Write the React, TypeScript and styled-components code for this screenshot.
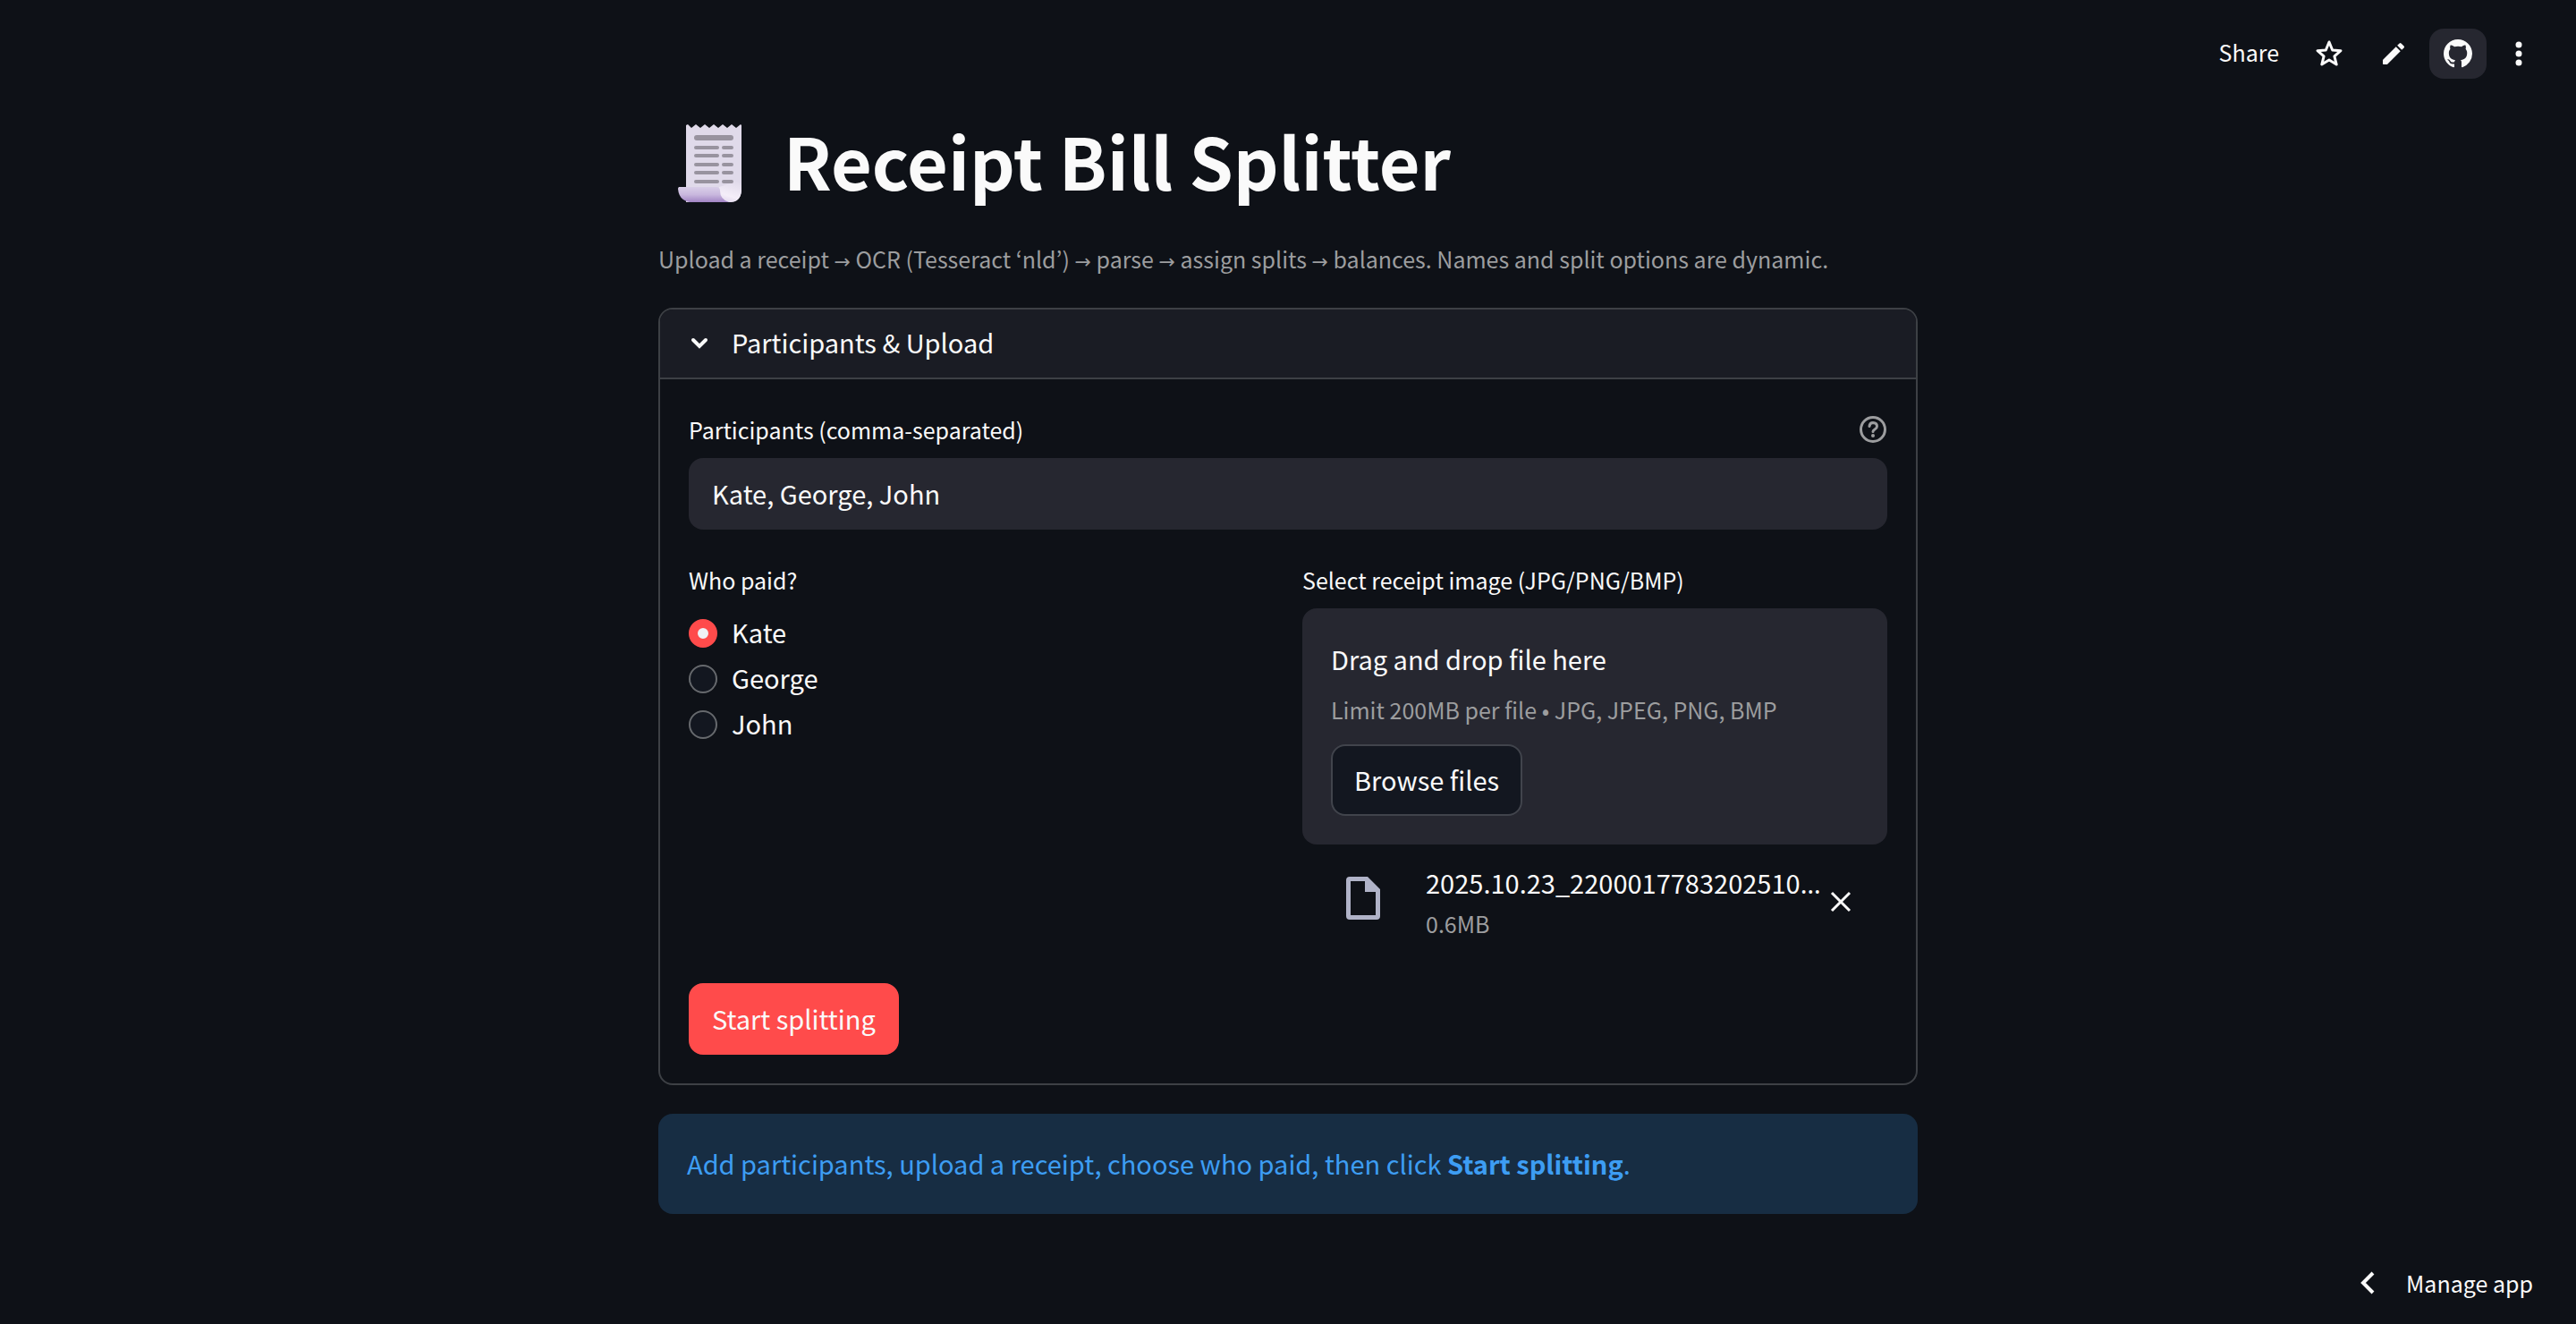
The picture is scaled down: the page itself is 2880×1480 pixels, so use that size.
import React, { useRef, useState } from 'react';
import styled, { createGlobalStyle, css } from 'styled-components';

const color = {
  bg: '#0e1117',
  raised: '#1a1c24',
  field: '#262730',
  button: '#131720',
  text: '#fafafa',
  muted: '#9c9d9f',
  line: '#3d4045',
  primary: '#ff4b4b',
  infoBg: '#172d43',
  info: '#3d9df3',
};

const GlobalStyle = createGlobalStyle`
  *, *::before, *::after { box-sizing: border-box; }
  body {
    margin: 0;
    background: ${color.bg};
    color: ${color.text};
    font: 400 29px/44px "Noto Sans CJK KR", "Noto Sans", sans-serif;
  }
  button, input { font: inherit; color: inherit; }
  button { cursor: pointer; }
`;

const Page = styled.div`
  display: flex;
  flex-direction: column;
  min-height: 100vh;
`;

const Toolbar = styled.header`
  display: flex;
  justify-content: flex-end;
  align-items: center;
  gap: 8px;
  height: 120px;
  padding: 0 36px;
`;

const ToolButton = styled.button<{ $active?: boolean; $width?: number }>`
  display: flex;
  align-items: center;
  justify-content: center;
  width: ${(p) => (p.$width ? `${p.$width}px` : 'auto')};
  height: 56px;
  padding: ${(p) => (p.$width ? '0' : '0 16px 4px')};
  border: 0;
  border-radius: 16px;
  background: ${(p) => (p.$active ? color.field : 'transparent')};
  font-size: 25px;
`;

const Icon = styled.svg<{ $size?: number }>`
  flex: none;
  width: ${(p) => p.$size ?? 32}px;
  height: ${(p) => p.$size ?? 32}px;
  fill: currentColor;
`;

const Main = styled.main`
  width: 100%;
  max-width: 1408px;
  margin: 0 auto;
`;

const Title = styled.h1`
  display: flex;
  align-items: center;
  gap: 28px;
  margin: 0;
  font-size: 79px;
  font-weight: 700;
  line-height: 118px;
`;

const ReceiptArt = styled.svg`
  flex: none;
  width: 112px;
  height: 112px;
`;

const Caption = styled.p`
  margin: 31px 0 35px;
  color: ${color.muted};
  font-size: 25px;
  line-height: 40px;
`;

const Arrow = styled.span`
  font-family: "DejaVu Sans", sans-serif;
  font-size: 22px;
  line-height: 1;
`;

const Ellipsis = styled.span`
  font-family: "Noto Sans", sans-serif;
  line-height: 1;
`;

const Panel = styled.details`
  border: 2px solid ${color.line};
  border-radius: 16px;
  overflow: hidden;
`;

const PanelHeader = styled.summary`
  display: flex;
  align-items: center;
  gap: 20px;
  padding: 14px 28px 18px;
  background: ${color.raised};
  cursor: pointer;
  list-style: none;
`;

const PanelBody = styled.form`
  display: flex;
  flex-direction: column;
  gap: 32px;
  padding: 32px;
  border-top: 2px solid ${color.line};
`;

const labelText = css`
  font-size: 25px;
  line-height: 48px;
`;

const LabelRow = styled.div`
  display: flex;
  align-items: center;
  justify-content: space-between;
  margin-bottom: 8px;
`;

const FieldLabel = styled.label`
  ${labelText}
`;

const HelpButton = styled.button`
  display: flex;
  padding: 0;
  border: 0;
  background: none;
  color: ${color.muted};
`;

const TextInput = styled.input`
  display: block;
  width: 100%;
  height: 80px;
  padding: 0 26px 2px;
  border: 0;
  border-radius: 16px;
  background: ${color.field};
`;

const Columns = styled.div`
  display: grid;
  grid-template-columns: 1fr 1fr;
  gap: 32px;
`;

const Column = styled.div`
  min-width: 0;
`;

const RadioGroup = styled.fieldset`
  min-width: 0;
  margin: 0;
  padding: 0;
  border: 0;
`;

const Legend = styled.legend`
  ${labelText}
  margin-bottom: 8px;
  padding: 0;
`;

const RadioList = styled.div`
  display: grid;
  justify-items: start;
  gap: 3px;
  padding-top: 4px;
`;

const RadioOption = styled.label`
  display: flex;
  align-items: center;
  gap: 16px;
  height: 48px;
  cursor: pointer;
`;

const RadioInput = styled.input`
  appearance: none;
  flex: none;
  width: 32px;
  height: 32px;
  margin: 0;
  border: 2px solid #66696d;
  border-radius: 50%;
  background: ${color.button};

  &:checked {
    border: 10px solid ${color.primary};
    background: #f0f2f6;
  }
`;

const RadioText = styled.span`
  padding-bottom: 4px;
`;

const Dropzone = styled.section`
  display: flex;
  flex-direction: column;
  align-items: flex-start;
  padding: 32px;
  border-radius: 16px;
  background: ${color.field};
`;

const DropHint = styled.span`
  line-height: 48px;
`;

const DropLimit = styled.span`
  margin: 9px 0 15px;
  color: ${color.muted};
  font-size: 25px;
  line-height: 48px;
`;

const HiddenFile = styled.input`
  display: none;
`;

const Button = styled.button<{ $primary?: boolean }>`
  align-self: flex-start;
  height: 80px;
  padding: 0 24px 3px;
  border: 2px solid ${(p) => (p.$primary ? color.primary : '#41444c')};
  border-radius: 16px;
  background: ${(p) => (p.$primary ? color.primary : color.button)};
`;

const FileRow = styled.div`
  display: flex;
  align-items: flex-start;
  padding: 20px 40px 13px 48px;
`;

const FileIcon = styled.svg`
  flex: none;
  width: 40px;
  height: 48px;
  margin: 16px 50px 0 0;
  fill: #b0b3c8;
`;

const FileInfo = styled.div`
  display: flex;
  flex: 1;
  flex-direction: column;
  gap: 2px;
  min-width: 0;
`;

const FileName = styled.span`
  white-space: nowrap;
`;

const FileSize = styled.span`
  color: ${color.muted};
  font-size: 25px;
`;

const RemoveButton = styled.button`
  display: flex;
  align-items: center;
  height: 88px;
  margin-left: 8px;
  padding: 0;
  border: 0;
  background: none;
`;

const Info = styled.div`
  margin-top: 32px;
  padding: 31px 32px 33px;
  border-radius: 16px;
  background: ${color.infoBg};
  color: ${color.info};
  line-height: 48px;
`;

const Footer = styled.footer`
  display: flex;
  justify-content: flex-end;
  margin-top: auto;
  padding: 0 48px 24px;
`;

const ManageButton = styled.button`
  display: flex;
  align-items: center;
  gap: 24px;
  padding: 0;
  border: 0;
  background: none;
  font-size: 25px;
`;

const Receipt = () => (
  <ReceiptArt viewBox="0 0 112 112" aria-hidden="true">
    <defs>
      <linearGradient id="roll" x1="0" y1="0" x2="0" y2="1">
        <stop offset="0" stopColor="#d9cfe8" />
        <stop offset="0.5" stopColor="#c9b8de" />
        <stop offset="1" stopColor="#a184c4" />
      </linearGradient>
      <linearGradient id="curl" x1="0.6" y1="0" x2="0.3" y2="1">
        <stop offset="0" stopColor="#e0daea" />
        <stop offset="0.7" stopColor="#f4eef9" />
        <stop offset="1" stopColor="#e3d9ee" />
      </linearGradient>
    </defs>
    <path
      d="M31 17l2-1 4 4 5-4 5 4 5-4 5 4 5-4 5 4 5-4 5 4 5-4 5 4 5-4 1 1v73q-1 13-14 13H31z"
      fill="#e0daea"
    />
    <path d="M68 86l25-8v12q-1 13-13 13-12-1-12-13z" fill="url(#curl)" />
    <path d="M23 86h43q3 1 3 4 0 10 10 13H35q-12-2-13-15 0-1 1-2z" fill="url(#roll)" />
    <rect x="40" y="28" width="44" height="6" rx="3" fill="#98939f" />
    {[40, 49, 59, 68, 78].map((y) => (
      <g key={y} fill="#98939f">
        <rect x="40" y={y} width="28" height="4" rx="2" />
        <rect x="71" y={y} width="13" height="4" rx="2" />
      </g>
    ))}
  </ReceiptArt>
);

const people = ['Kate', 'George', 'John'];

export default function App() {
  const [names, setNames] = useState(people.join(', '));
  const [payer, setPayer] = useState('Kate');
  const [hasFile, setHasFile] = useState(true);
  const fileRef = useRef<HTMLInputElement>(null);

  return (
    <>
      <GlobalStyle />
      <Page>
        <Toolbar>
          <ToolButton type="button">Share</ToolButton>
          <ToolButton type="button" $width={64} aria-label="Favorite">
            <Icon viewBox="0 0 32 32">
              <path
                d="M16 3l3.700 9 9.300.700-7.100 6.100 2.300 9.200-8.200-5-8.200 5 2.300-9.200L3 12.700l9.300-.700z"
                fill="none"
                stroke="currentColor"
                strokeWidth="3"
                strokeLinejoin="round"
              />
            </Icon>
          </ToolButton>
          <ToolButton type="button" $width={64} aria-label="Edit source">
            <Icon viewBox="0 0 24 24">
              <path d="M3 17.460v3.040c0 .280.220.500.500.500h3.040c.130 0 .260-.050.350-.150L17.810 9.940l-3.750-3.750L3.150 17.100c-.100.100-.150.220-.150.360zM20.710 7.040a.996.996 0 0 0 0-1.410l-2.340-2.340a.996.996 0 0 0-1.410 0l-1.830 1.830 3.750 3.750 1.830-1.830z" />
            </Icon>
          </ToolButton>
          <ToolButton type="button" $width={64} $active aria-label="View on GitHub">
            <Icon viewBox="0 0 16 16">
              <path d="M8 0C3.580 0 0 3.580 0 8c0 3.540 2.290 6.530 5.470 7.590.400.070.550-.170.550-.380 0-.190-.010-.820-.010-1.490-2.010.370-2.530-.490-2.690-.940-.090-.230-.480-.940-.820-1.130-.280-.150-.680-.520-.010-.530.630-.010 1.080.580 1.230.820.720 1.210 1.870.870 2.330.660.070-.520.280-.870.510-1.070-1.780-.200-3.640-.890-3.640-3.950 0-.870.310-1.590.820-2.150-.080-.200-.360-1.020.080-2.120 0 0 .670-.210 2.200.820.640-.180 1.320-.270 2-.270s1.360.090 2 .270c1.530-1.040 2.200-.820 2.200-.820.440 1.100.160 1.920.080 2.120.510.560.820 1.270.820 2.150 0 3.070-1.870 3.750-3.650 3.950.290.250.540.730.540 1.480 0 1.070-.010 1.930-.010 2.200 0 .210.150.460.550.380A8.013 8.013 0 0 0 16 8c0-4.420-3.580-8-8-8z" />
            </Icon>
          </ToolButton>
          <ToolButton type="button" $width={56} aria-label="Main menu">
            <Icon viewBox="0 0 32 32">
              <circle cx="16" cy="6" r="3.500" />
              <circle cx="16" cy="16" r="3.500" />
              <circle cx="16" cy="26" r="3.500" />
            </Icon>
          </ToolButton>
        </Toolbar>

        <Main>
          <Title>
            <Receipt />
            Receipt Bill Splitter
          </Title>
          <Caption>
            Upload a receipt <Arrow>→</Arrow> OCR (Tesseract ‘nld’) <Arrow>→</Arrow> parse <Arrow>→</Arrow> assign
            splits <Arrow>→</Arrow> balances. Names and split options are dynamic.
          </Caption>

          <Panel open>
            <PanelHeader>
              <Icon viewBox="0 0 32 32">
                <path d="M9 14l7 7 7-7" fill="none" stroke="currentColor" strokeWidth="4" strokeLinecap="round" />
              </Icon>
              Participants &amp; Upload
            </PanelHeader>
            <PanelBody onSubmit={(e) => e.preventDefault()}>
              <div>
                <LabelRow>
                  <FieldLabel htmlFor="participants">Participants (comma-separated)</FieldLabel>
                  <HelpButton type="button" aria-label="Help">
                    <Icon viewBox="0 0 32 32">
                      <g fill="none" stroke="currentColor" strokeWidth="3" strokeLinecap="round">
                        <circle cx="16" cy="16" r="13.500" />
                        <path d="M12 12.500q.500-4 4-4 4.500.300 4.500 4 0 2-2.500 3.500-2 1.200-2 2.500" />
                      </g>
                      <circle cx="16" cy="23" r="2" />
                    </Icon>
                  </HelpButton>
                </LabelRow>
                <TextInput id="participants" type="text" value={names} onChange={(e) => setNames(e.target.value)} />
              </div>

              <Columns>
                <Column>
                  <RadioGroup>
                    <Legend>Who paid?</Legend>
                    <RadioList>
                      {people.map((person) => (
                        <RadioOption key={person}>
                          <RadioInput
                            type="radio"
                            name="payer"
                            checked={payer === person}
                            onChange={() => setPayer(person)}
                          />
                          <RadioText>{person}</RadioText>
                        </RadioOption>
                      ))}
                    </RadioList>
                  </RadioGroup>
                </Column>
                <Column>
                  <LabelRow>
                    <FieldLabel htmlFor="receipt">Select receipt image (JPG/PNG/BMP)</FieldLabel>
                  </LabelRow>
                  <Dropzone>
                    <DropHint>Drag and drop file here</DropHint>
                    <DropLimit>Limit 200MB per file • JPG, JPEG, PNG, BMP</DropLimit>
                    <HiddenFile ref={fileRef} id="receipt" type="file" accept=".jpg,.jpeg,.png,.bmp" />
                    <Button type="button" onClick={() => fileRef.current?.click()}>
                      Browse files
                    </Button>
                  </Dropzone>
                  {hasFile && (
                    <FileRow>
                      <FileIcon viewBox="0 0 40 48" aria-hidden="true">
                        <path
                          fillRule="evenodd"
                          d="M5 0h20l14 14v30a4 4 0 0 1-4 4H5a4 4 0 0 1-4-4V4a4 4 0 0 1 4-4zm1 5v38h28V17H22V5z"
                        />
                      </FileIcon>
                      <FileInfo>
                        <FileName>
                          2025.10.23_2200017783202510<Ellipsis>…</Ellipsis>
                        </FileName>
                        <FileSize>0.6MB</FileSize>
                      </FileInfo>
                      <RemoveButton type="button" aria-label="Remove file" onClick={() => setHasFile(false)}>
                        <Icon viewBox="0 0 24 24" $size={24}>
                          <path d="M2 2l20 20M22 2L2 22" stroke="currentColor" strokeWidth="3" />
                        </Icon>
                      </RemoveButton>
                    </FileRow>
                  )}
                </Column>
              </Columns>

              <Button type="submit" $primary>
                Start splitting
              </Button>
            </PanelBody>
          </Panel>

          <Info role="status">
            Add participants, upload a receipt, choose who paid, then click <strong>Start splitting</strong>.
          </Info>
        </Main>

        <Footer>
          <ManageButton type="button">
            <Icon viewBox="0 0 32 32">
              <path d="M19 5L8 16l11 11" fill="none" stroke="currentColor" strokeWidth="4" />
            </Icon>
            Manage app
          </ManageButton>
        </Footer>
      </Page>
    </>
  );
}
